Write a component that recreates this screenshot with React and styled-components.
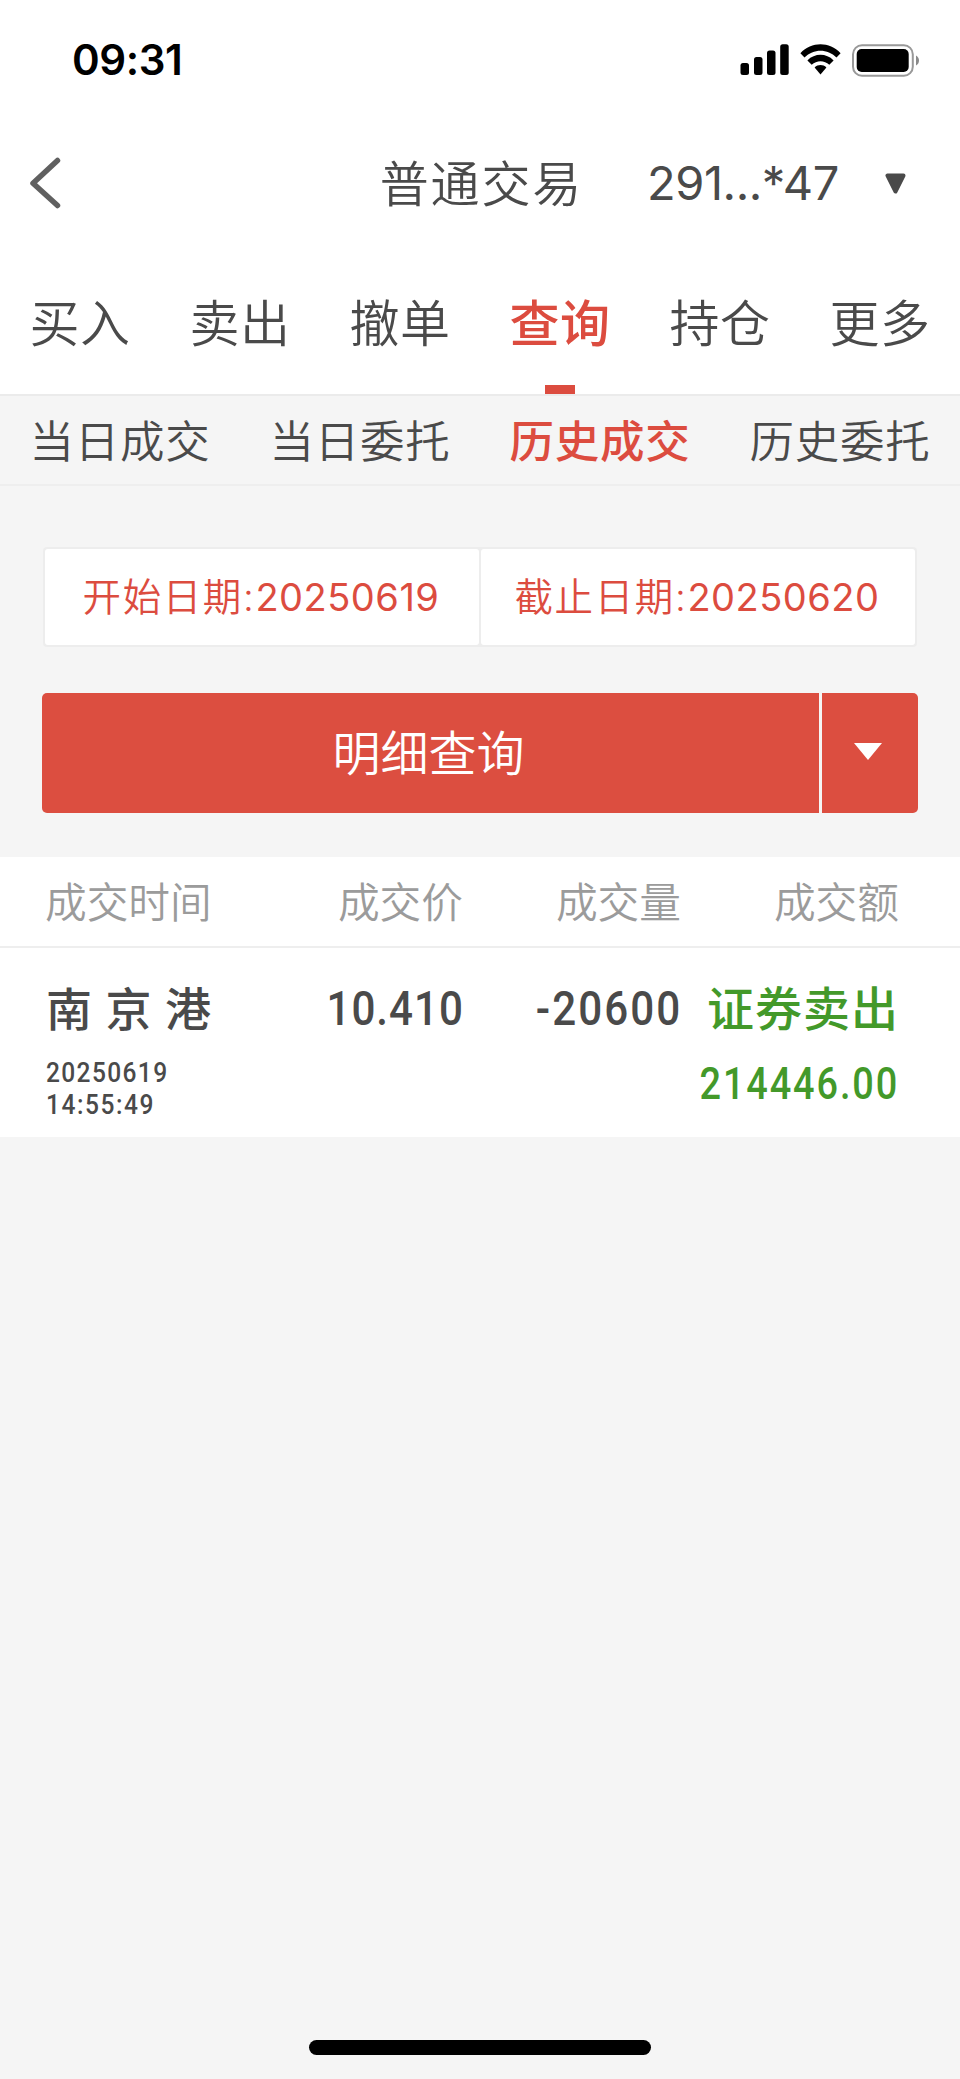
import React, { useState } from 'react';
import styled, { createGlobalStyle } from 'styled-components';

const GlobalStyle = createGlobalStyle`
  * {
    box-sizing: border-box;
  }

  body {
    margin: 0;
    background-color: #f5f5f5;
    font-family: Inter, "Noto Sans CJK SC", sans-serif;
    color: #4a4a4a;
  }

  button {
    padding: 0;
    border: 0;
    background: none;
    font: inherit;
    color: inherit;
  }
`;

const PageContainer = styled.div`
  width: 960px;
  height: 2079px;
  display: flex;
  flex-direction: column;
  background-color: #f5f5f5;
  white-space: nowrap;
`;

const StatusBar = styled.div`
  height: 120px;
  padding: 0 40px 0 72px;
  display: flex;
  align-items: center;
  justify-content: space-between;
  background-color: #ffffff;
`;

const Clock = styled.span`
  padding-bottom: 1px;
  color: #000000;
  font-size: 42px;
  font-weight: 600;
  letter-spacing: -0.4px;
`;

const StatusIcons = styled.div`
  display: flex;
  align-items: center;
  gap: 11px;
`;

const Header = styled.div`
  height: 126px;
  padding: 0 54px 0 29px;
  display: flex;
  align-items: center;
  background-color: #ffffff;
`;

const BackButton = styled.button`
  width: 32px;
  height: 54px;
`;

const Title = styled.h1`
  margin: 0 0 0 auto;
  padding-bottom: 5px;
  font-size: 49px;
  font-weight: 350;
  letter-spacing: 1.8px;
`;

const Account = styled.span`
  margin-left: 64px;
  width: 195px;
  padding-bottom: 2px;
  font-size: 47px;
  font-weight: 400;
  letter-spacing: -0.45px;
`;

const AccountArrow = styled.svg`
  margin-left: 43px;
`;

const TabBar = styled.div`
  height: 150px;
  display: grid;
  grid-template-columns: repeat(6, 1fr);
  background-color: #ffffff;
  border-bottom: 2px solid #ebebeb;
`;

const Tab = styled.button`
  position: relative;
  padding: 0 0 1px;
  font-size: 50px;
  font-weight: ${(props) => (props.$active ? 500 : 350)};
  letter-spacing: 0.6px;
  color: ${(props) => (props.$active ? '#dc4c3f' : '#4a4a4a')};

  &::after {
    content: '';
    display: ${(props) => (props.$active ? 'block' : 'none')};
    position: absolute;
    bottom: 0;
    left: 65px;
    width: 30px;
    height: 9px;
    background-color: #dc4c3f;
  }
`;

const SubTabBar = styled.div`
  height: 90px;
  display: grid;
  grid-template-columns: repeat(4, 1fr);
  border-bottom: 2px solid #eeeeee;
`;

const SubTab = styled.button`
  padding: 0 0 3px;
  font-size: 44.5px;
  font-weight: ${(props) => (props.$active ? 500 : 350)};
  letter-spacing: 0.8px;
  color: ${(props) => (props.$active ? '#dc4c3f' : '#4a4a4a')};
`;

const QueryForm = styled.div`
  height: 371px;
  padding: 61px 42px 0;
`;

const DateRow = styled.div`
  height: 100px;
  margin: 0 1px;
  display: grid;
  grid-template-columns: 1fr 1fr;
  gap: 2px;
  padding: 2px;
  border-radius: 4px;
  background-color: #ededed;
`;

const DateField = styled.button`
  padding: 0 2px 6px 0;
  border-radius: 3px;
  background-color: #ffffff;
  color: #dc4c3f;
  font-size: 38.5px;
  font-weight: 350;
  letter-spacing: 1.6px;
`;

const DateValue = styled.span`
  font-size: 38px;
  font-weight: 400;
  letter-spacing: 0.5px;
`;

const QueryRow = styled.div`
  height: 120px;
  margin-top: 46px;
  display: flex;
  gap: 3px;
  border-radius: 5px;
  overflow: hidden;
`;

const QueryButton = styled.button`
  flex: 1;
  padding: 0 4px 6px 0;
  background-color: #dc4e40;
  color: #ffffff;
  font-size: 48px;
  font-weight: 350;
`;

const MoreButton = styled.button`
  width: 96px;
  padding: 0 4px 3px 0;
  display: flex;
  align-items: center;
  justify-content: center;
  background-color: #dc4e40;
`;

const Table = styled.div`
  background-color: #ffffff;
`;

const TableHead = styled.div`
  height: 91px;
  padding: 0 61px 4px 45px;
  display: grid;
  grid-template-columns: 200px 218px 218px 218px;
  align-items: center;
  border-bottom: 2px solid #eeeeee;
  color: #9b9b9b;
  font-size: 41.7px;
  font-weight: 350;
`;

const HeadCell = styled.span`
  text-align: ${(props) => props.$align || 'right'};
`;

const TableRow = styled.div`
  height: 189px;
  padding: 25px 61px 0 46px;
  display: grid;
  grid-template-columns: 200px 218px 218px 217px;
  align-items: start;
`;

const Cell = styled.div`
  display: flex;
  flex-direction: column;
  align-items: ${(props) => props.$align || 'flex-end'};
  color: ${(props) => props.$color || '#4a4a4a'};
`;

const StockName = styled.div`
  width: 165px;
  height: 72px;
  line-height: 72px;
  display: flex;
  justify-content: space-between;
  font-size: 46px;
  font-weight: 500;
`;

const Digits = styled.span`
  height: ${(props) => props.$line}px;
  line-height: ${(props) => props.$line}px;
  font-family: Roboto, sans-serif;
  font-size: ${(props) => props.$size}px;
  font-weight: 500;
  letter-spacing: ${(props) => props.$spacing || 0}px;
  transform: scaleX(0.86);
  transform-origin: ${(props) => props.$origin || 'right'};
`;

const DateTime = styled.div`
  margin-top: 12px;
  display: flex;
  flex-direction: column;
`;

const Side = styled.span`
  height: 72px;
  line-height: 72px;
  font-size: 47px;
  font-weight: 500;
  letter-spacing: 1px;
`;

const Amount = styled.div`
  margin-top: 1px;
`;

const HomeArea = styled.div`
  margin-top: auto;
  height: 39px;
  display: flex;
  justify-content: center;
`;

const HomeIndicator = styled.div`
  width: 342px;
  height: 15px;
  border-radius: 8px;
  background-color: #000000;
`;

const tabs = ['买入', '卖出', '撤单', '查询', '持仓', '更多'];
const subTabs = ['当日成交', '当日委托', '历史成交', '历史委托'];

const trades = [
  {
    name: '南京港',
    date: '20250619',
    time: '14:55:49',
    price: '10.410',
    volume: '-20600',
    side: '证券卖出',
    amount: '214446.00',
  },
];

function Signal() {
  return (
    <svg width="49" height="32" viewBox="0 0 49 32">
      <rect x="0.5" y="19" width="8.5" height="12" rx="2.5" />
      <rect x="14" y="13" width="8.5" height="18" rx="2.5" />
      <rect x="27" y="6.5" width="8.5" height="24.5" rx="2.5" />
      <rect x="40.2" y="0.3" width="8.5" height="30.7" rx="2.5" />
    </svg>
  );
}

function Wifi() {
  return (
    <svg width="41" height="32" viewBox="0 0 41 32">
      <path d="M0.4 9.2C11.5 -2.7 29.5 -2.7 40.6 9.2L36.5 13.6C27.5 4.5 13.5 4.5 4.5 13.6Z" />
      <path d="M7.4 16.4C14.8 9 26.2 9 33.6 16.4L29.3 20.7C24.3 16 16.7 16 11.7 20.7Z" />
      <path d="M14.6 23.5C18 20.3 23 20.3 26.4 23.5L20.5 30.6Z" />
    </svg>
  );
}

function Battery() {
  return (
    <svg width="68" height="33" viewBox="0 0 68 33">
      <rect x="1" y="1.2" width="59.8" height="30.6" rx="9" fill="none" stroke="#999999" strokeWidth="2" />
      <rect x="4.7" y="5" width="52" height="23" rx="5" />
      <path d="M64 11.5C68 13.5 68 19.5 64 21.5Z" fill="#8a8a8a" />
    </svg>
  );
}

function App() {
  const [activeTab, setActiveTab] = useState('查询');
  const [activeSubTab, setActiveSubTab] = useState('历史成交');

  return (
    <PageContainer>
      <GlobalStyle />
      <StatusBar>
        <Clock>09:31</Clock>
        <StatusIcons>
          <Signal />
          <Wifi />
          <Battery />
        </StatusIcons>
      </StatusBar>

      <Header>
        <BackButton>
          <svg width="32" height="54" viewBox="0 0 32 54">
            <path d="M28.5 4.5L4 27.3L28.5 49.5" fill="none" stroke="#606060" strokeWidth="5.5" strokeLinecap="round" strokeLinejoin="round" />
          </svg>
        </BackButton>
        <Title>普通交易</Title>
        <Account>291...*47</Account>
        <AccountArrow width="21" height="21" viewBox="0 0 21 21">
          <path d="M2.5 2.5H18.5L10.5 18.5Z" fill="#4a4a4a" stroke="#4a4a4a" strokeWidth="4" strokeLinejoin="round" />
        </AccountArrow>
      </Header>

      <TabBar>
        {tabs.map((tab) => (
          <Tab key={tab} $active={tab === activeTab} onClick={() => setActiveTab(tab)}>
            {tab}
          </Tab>
        ))}
      </TabBar>

      <SubTabBar>
        {subTabs.map((tab) => (
          <SubTab key={tab} $active={tab === activeSubTab} onClick={() => setActiveSubTab(tab)}>
            {tab}
          </SubTab>
        ))}
      </SubTabBar>

      <QueryForm>
        <DateRow>
          <DateField>开始日期:<DateValue>20250619</DateValue></DateField>
          <DateField>截止日期:<DateValue>20250620</DateValue></DateField>
        </DateRow>
        <QueryRow>
          <QueryButton>明细查询</QueryButton>
          <MoreButton>
            <svg width="28" height="17" viewBox="0 0 28 17">
              <path d="M0 0H28L14 17Z" fill="#ffffff" />
            </svg>
          </MoreButton>
        </QueryRow>
      </QueryForm>

      <Table>
        <TableHead>
          <HeadCell $align="left">成交时间</HeadCell>
          <HeadCell>成交价</HeadCell>
          <HeadCell>成交量</HeadCell>
          <HeadCell>成交额</HeadCell>
        </TableHead>
        {trades.map((trade) => (
          <TableRow key={trade.date + trade.time}>
            <Cell $align="flex-start">
              <StockName>
                {trade.name.split('').map((char) => (
                  <span key={char}>{char}</span>
                ))}
              </StockName>
              <DateTime>
                <Digits $size={28.5} $line={32} $spacing={1.6} $origin="left">{trade.date}</Digits>
                <Digits $size={28.5} $line={32} $spacing={1.8} $origin="left">{trade.time}</Digits>
              </DateTime>
            </Cell>
            <Cell>
              <Digits $size={49} $line={72} $spacing={1.2}>{trade.price}</Digits>
            </Cell>
            <Cell>
              <Digits $size={49} $line={72} $spacing={2.4}>{trade.volume}</Digits>
            </Cell>
            <Cell $color="#43992a">
              <Side>{trade.side}</Side>
              <Amount>
                <Digits as="div" $size={44} $line={76} $spacing={2.2}>{trade.amount}</Digits>
              </Amount>
            </Cell>
          </TableRow>
        ))}
      </Table>

      <HomeArea>
        <HomeIndicator />
      </HomeArea>
    </PageContainer>
  );
}

export default App;
